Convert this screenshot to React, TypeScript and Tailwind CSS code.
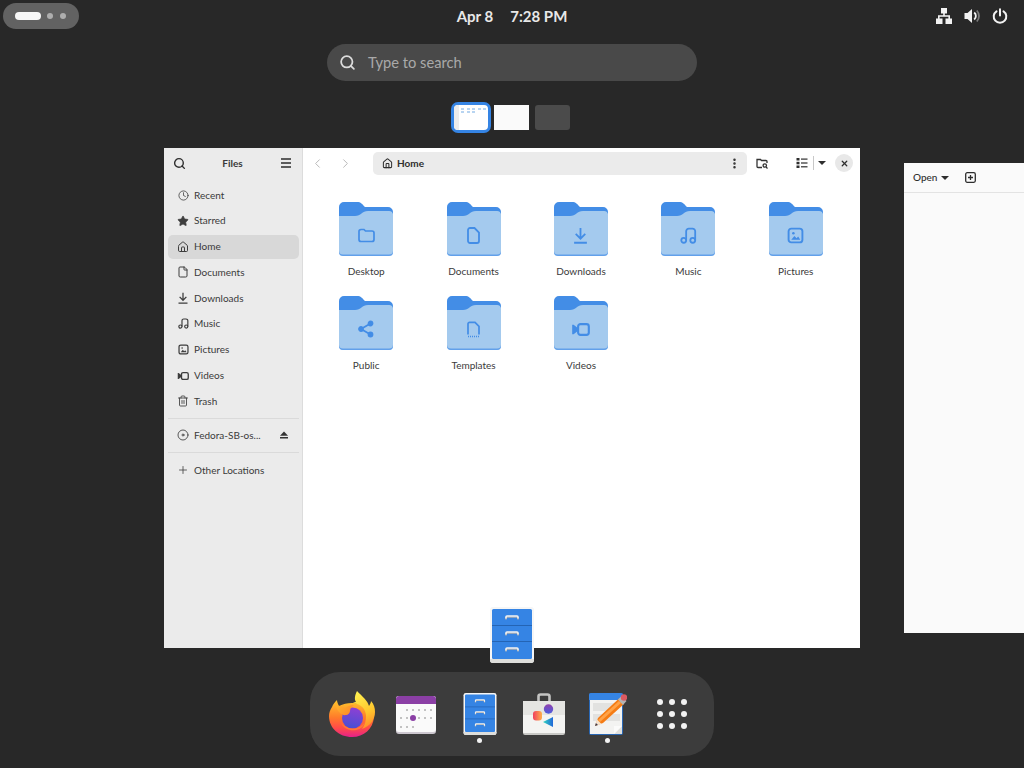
import {
  ChevronLeft,
  ChevronRight,
  Clock,
  Disc,
  EllipsisVertical,
  File,
  Home,
  Plus,
  Search,
  Star,
  Trash2,
  X,
} from "lucide-react";
import type { ReactNode } from "react";

type GlyphProps = { size?: number };

function VideoGlyph({ size = 12 }: GlyphProps) {
  return (
    <svg width={size} height={size} viewBox="0 0 16 16" fill="none">
      <rect x="6" y="3.500" width="9" height="9" rx="2" stroke="currentColor" strokeWidth="1.800" />
      <path d="M1 4v8h1.200L6 9V7L2.200 4z" fill="currentColor" />
    </svg>
  );
}

function DownloadGlyph({ size = 12 }: GlyphProps) {
  return (
    <svg width={size} height={size} viewBox="0 0 16 16" fill="none" stroke="currentColor" strokeWidth="1.700">
      <path d="M8 1v9.500M3.500 6.500 8 11l4.500-4.500M2 14.800h12" />
    </svg>
  );
}

function MusicGlyph({ size = 12 }: GlyphProps) {
  return (
    <svg width={size} height={size} viewBox="0 0 16 16" fill="none" stroke="currentColor" strokeWidth="1.700">
      <circle cx="3.500" cy="12.500" r="2.300" />
      <circle cx="12" cy="12.500" r="2.300" />
      <path d="M5.800 12.500V4a2.500 2.500 0 0 1 2.500-2.500h3.500A2.500 2.500 0 0 1 14.300 4v8.500" />
    </svg>
  );
}

function ImageGlyph({ size = 12 }: GlyphProps) {
  return (
    <svg width={size} height={size} viewBox="0 0 16 16" fill="none">
      <rect x="1.500" y="1.500" width="13" height="13" rx="2.500" stroke="currentColor" strokeWidth="1.800" />
      <path d="M4 12 7 8.500l2 2 1.500-1.500L12.500 12z" fill="currentColor" />
      <circle cx="6" cy="5.800" r="1.200" fill="currentColor" />
    </svg>
  );
}

function EjectGlyph() {
  return (
    <svg width="10" height="10" viewBox="0 0 10 10" fill="#333">
      <path d="M5 1.500 9 5.800H1z" />
      <rect x="1" y="7" width="8" height="1.500" />
    </svg>
  );
}

function Folder({ glyph }: { glyph: ReactNode }) {
  return (
    <div className="relative w-[54px] h-[56px]">
      <svg width="54" height="56" viewBox="0 0 54 56">
        <path
          d="M5 1h13c4 0 5 2 8 5h23a5 5 0 0 1 5 5v38a5 5 0 0 1-5 5H5a5 5 0 0 1-5-5V6a5 5 0 0 1 5-5z"
          fill="#438de6"
        />
        <path
          d="M0 15h16c6 0 7-5 13-5h21a4 4 0 0 1 4 3v38a4 4 0 0 1-4 4H4a4 4 0 0 1-4-4z"
          fill="#a4caee"
        />
        <path d="M0 50a4 4 0 0 0 4 3.500h46a4 4 0 0 0 4-3.500v1a4 4 0 0 1-4 4H4a4 4 0 0 1-4-4z" fill="#62a0ea" />
      </svg>
      <div className="absolute left-0 top-[13px] w-[54px] h-[42px] flex items-center justify-center text-[#438de6]">
        {glyph}
      </div>
    </div>
  );
}

const folders: { name: string; glyph: ReactNode }[] = [
  {
    name: "Desktop",
    glyph: (
      <svg width="17" height="17" viewBox="0 0 17 17" fill="none" stroke="currentColor" strokeWidth="1.700">
        <path d="M1 4.500a2 2 0 0 1 2-2h3l1.500 1.500H14a2 2 0 0 1 2 2v6.500a2 2 0 0 1-2 2H3a2 2 0 0 1-2-2z" />
      </svg>
    ),
  },
  {
    name: "Documents",
    glyph: (
      <svg width="17" height="17" viewBox="0 0 17 17" fill="none" stroke="currentColor" strokeWidth="1.800">
        <path d="M3 3a2 2 0 0 1 2-2h4.500L14 5.500V14a2 2 0 0 1-2 2H5a2 2 0 0 1-2-2z" />
      </svg>
    ),
  },
  { name: "Downloads", glyph: <DownloadGlyph size={17} /> },
  { name: "Music", glyph: <MusicGlyph size={17} /> },
  { name: "Pictures", glyph: <ImageGlyph size={17} /> },
  {
    name: "Public",
    glyph: (
      <svg width="18" height="18" viewBox="0 0 18 18" fill="currentColor" stroke="currentColor" strokeWidth="1.800">
        <circle cx="13.500" cy="3.500" r="2" />
        <circle cx="4" cy="9" r="2" />
        <circle cx="13.500" cy="14.500" r="2" />
        <path d="M13.500 3.500 4 9l9.500 5.500" fill="none" />
      </svg>
    ),
  },
  {
    name: "Templates",
    glyph: (
      <svg width="17" height="17" viewBox="0 0 17 17" fill="none" stroke="currentColor" strokeWidth="1.700">
        <path d="M3 13.500V2.800a1.500 1.500 0 0 1 1.500-1.500H10l4 4v8.200" />
        <path d="M3 15.500h11" strokeDasharray="1 1" />
      </svg>
    ),
  },
  { name: "Videos", glyph: <VideoGlyph size={19} /> },
];

function SideRow({ icon, label, active }: { icon: ReactNode; label: string; active?: boolean }) {
  return (
    <div
      className={`h-[24px] mb-[1.800px] ml-[4px] mr-[3px] pl-[9px] rounded-[5px] flex items-center gap-[5px] text-[10px] text-[#3a3a3a] ${
        active ? "bg-[#d8d8d8]" : ""
      }`}
    >
      <span className="w-[12px] h-[12px] flex items-center justify-center text-[#3d3d3d]">{icon}</span>
      <span>{label}</span>
    </div>
  );
}

function FilesIcon({ width, height }: { width: number; height: number }) {
  return (
    <svg width={width} height={height} viewBox="0 0 44 56">
      <rect x="0" y="0" width="44" height="56" rx="3" fill="#f6f6f6" />
      <path d="M0 53a3 3 0 0 0 3 3h38a3 3 0 0 0 3-3v-1H0z" fill="#dededb" />
      <rect x="2" y="2" width="40" height="50" rx="1.500" fill="#3584e4" />
      <path d="M2 18.500h40M2 34.500h40" stroke="#2464b4" strokeWidth="1" />
      {[10, 26, 42].map((y) => (
        <g key={y} fill="none" strokeWidth="1.600">
          <path d={`M16 ${y + 2.500}v-1.500a1 1 0 0 1 1-1h10a1 1 0 0 1 1 1v1.500`} stroke="#b0b0b0" />
          <path d={`M16 ${y + 1.500}v-1.500a1 1 0 0 1 1-1h10a1 1 0 0 1 1 1v1.500`} stroke="#f2f2f2" />
        </g>
      ))}
    </svg>
  );
}

function Firefox() {
  return (
    <svg width="46" height="46" viewBox="0 0 46 46">
      <defs>
        <linearGradient id="ffBody" x1="0.500" y1="0.050" x2="0.500" y2="1">
          <stop offset="0" stopColor="#ffc02c" />
          <stop offset="0.450" stopColor="#ff7a2a" />
          <stop offset="0.750" stopColor="#ff4a4a" />
          <stop offset="1" stopColor="#e6208a" />
        </linearGradient>
        <linearGradient id="ffFlame" x1="0.350" y1="0" x2="0.650" y2="1">
          <stop offset="0" stopColor="#fff04f" />
          <stop offset="0.600" stopColor="#ffc52c" />
          <stop offset="1" stopColor="#ff8a2a" />
        </linearGradient>
        <linearGradient id="ffGlobe" x1="0.600" y1="0" x2="0.400" y2="1">
          <stop offset="0" stopColor="#8f3fd4" />
          <stop offset="1" stopColor="#4750d2" />
        </linearGradient>
        <linearGradient id="ffFox" x1="0" y1="0" x2="1" y2="0.600">
          <stop offset="0" stopColor="#ffb52c" />
          <stop offset="1" stopColor="#ff8a2a" />
        </linearGradient>
      </defs>
      <path
        d="M8 9c0 2 1 4 2 6 4-2 8-3 13-3 10 0 21 3 22 14 -1 12-10 20-22 20C10 46 0 37 0 25c0-3 1-6 3-9 1-3 3-5 5-7z"
        fill="url(#ffBody)"
      />
      <path
        d="M28 0c-2 4-3 8-1 11 -1 0-2 0-3 1 8 1 13 6 13 13 0 5-1 9-4 13 8-3 13-9 13-17 0-4-1-8-4-11 0 2-1 3-2 5C39 10 33 5 28 0z"
        fill="url(#ffFlame)"
      />
      <circle cx="23.500" cy="27" r="10.500" fill="url(#ffGlobe)" />
      <path
        d="M7 15c4-1 7 1 9 2 2-2 6-3 9-3 -3 2-4 4-4 6 0 2-2 4-4 4C13 25 8 20 7 15z"
        fill="url(#ffFox)"
      />
      <path d="M12 32c3 6 9 8 15 7 5-1 8-4 9-8 -3 4-7 6.500-12 6.500 -5 0-9-2-12-5.500z" fill="#ff7a35" />
    </svg>
  );
}

function CalendarIcon() {
  const dots: [number, number][] = [
    [11, 15], [17, 15], [23, 15], [29, 15], [35, 15],
    [5, 23], [11, 23], [23, 23], [29, 23], [35, 23],
    [5, 32], [11, 32], [17, 32],
  ];
  return (
    <svg width="40" height="39" viewBox="0 0 40 39">
      <rect x="0" y="1" width="40" height="38" rx="3" fill="#cdc8d0" />
      <rect x="0" y="1" width="40" height="36" rx="3" fill="#fafafa" />
      <path d="M0 4a3 3 0 0 1 3-3h34a3 3 0 0 1 3 3v5H0z" fill="#8b3fa5" />
      {dots.map(([x, y]) => (
        <rect key={`${x}-${y}`} x={x - 1} y={y - 1} width="2" height="2" fill="#c2c2c2" />
      ))}
      <circle cx="17" cy="23" r="3" fill="#8b3fa5" />
    </svg>
  );
}

function SoftwareIcon() {
  return (
    <svg width="42" height="42" viewBox="0 0 42 42">
      <defs>
        <linearGradient id="swRed" x1="1" y1="0" x2="0" y2="0">
          <stop offset="0" stopColor="#ffb04a" />
          <stop offset="1" stopColor="#f03f5f" />
        </linearGradient>
        <linearGradient id="swBlue" x1="1" y1="0" x2="0" y2="0">
          <stop offset="0" stopColor="#2166d8" />
          <stop offset="1" stopColor="#2fd9bf" />
        </linearGradient>
        <linearGradient id="swPurple" x1="0.500" y1="0" x2="0.500" y2="1">
          <stop offset="0" stopColor="#9141ac" />
          <stop offset="1" stopColor="#4a5ee0" />
        </linearGradient>
      </defs>
      <path d="M15.500 8V3.500a2 2 0 0 1 2-2h7a2 2 0 0 1 2 2V8" fill="none" stroke="#c4c4c2" strokeWidth="2.600" />
      <rect x="0" y="8" width="42" height="34" rx="2" fill="#c9c9c6" />
      <rect x="0" y="8" width="42" height="32" rx="1" fill="#f4f4f2" />
      <rect x="0" y="8" width="42" height="14" fill="#e5e5e2" />
      <rect x="10" y="18" width="9" height="9.500" rx="3" fill="url(#swRed)" />
      <circle cx="25.500" cy="16" r="4.700" fill="url(#swPurple)" />
      <path d="M30 24v10l-10-5z" fill="url(#swBlue)" />
    </svg>
  );
}

function EditorIcon() {
  return (
    <svg width="38" height="43" viewBox="0 0 38 43">
      <rect x="0" y="0" width="34" height="42" rx="2" fill="#2a68b5" />
      <rect x="1" y="7" width="32" height="34" fill="#f3f3f1" />
      <path d="M0 2a2 2 0 0 1 2-2h30a2 2 0 0 1 2 2v5H0z" fill="#3584e4" />
      <rect x="4" y="10" width="24" height="8" fill="#e2e2e0" />
      <rect x="4" y="21" width="27" height="7" fill="#e2e2e0" />
      <path d="M25 41l8-8v8z" fill="#e0e0dd" />
      <path d="M25 41l8-8h-8z" fill="#fbfbfa" />
      <path d="M6 33 9 25 30 5.500l5 5.500L14 30z" fill="#f57c14" />
      <path d="M9 27 30 8l2 2L11 29z" fill="#ffa348" />
      <path d="M6 33 8 26.500 12.500 31z" fill="#f4e3cf" />
      <path d="M6 33 6.900 30 9 32z" fill="#3d3846" />
      <path d="M29 6.500 32.500 3l5 5-3.500 4z" fill="#b4b4b4" />
      <circle cx="35" cy="4.500" r="3.200" fill="#dc5a62" />
    </svg>
  );
}

function DockItem({ children, running }: { children: ReactNode; running?: boolean }) {
  return (
    <div className="relative w-[64px] h-[84px] flex items-center justify-center">
      {children}
      {running && <span className="absolute left-[29px] top-[66px] w-[5px] h-[5px] rounded-full bg-[#f2f2f2]" />}
    </div>
  );
}

export default function App() {
  return (
    <div className="w-[1024px] h-[768px] bg-[#282828] flex flex-col overflow-hidden font-['Lato','Noto_Sans',sans-serif]">
      <header className="h-[32px] px-[3px] pt-[3px] grid grid-cols-[1fr_auto_1fr] items-start">
        <div className="w-[76px] h-[26px] rounded-full bg-[#626262] flex items-center pl-[12px] gap-[6px]">
          <span className="w-[26px] h-[8px] rounded-full bg-[#f7f7f7]" />
          <span className="w-[6px] h-[6px] rounded-full bg-[#aeaeae]" />
          <span className="w-[6px] h-[6px] ml-[1px] rounded-full bg-[#aeaeae]" />
        </div>
        <div className="h-[26px] flex items-center gap-[17px] text-[15px] font-bold text-[#e8e8e8]">
          <span>Apr 8</span>
          <span>7:28 PM</span>
        </div>
        <div className="h-[26px] pr-[13px] flex items-center justify-end gap-[12px] text-[#f2f2f2]">
          <svg width="16" height="16" viewBox="0 0 16 16" fill="currentColor">
            <rect x="5" y="0" width="6" height="5.500" />
            <rect x="0" y="10.500" width="6.500" height="5.500" />
            <rect x="9.500" y="10.500" width="6.500" height="5.500" />
            <path d="M7.200 5h1.600v2.200H14V11h-1.600V8.800H3.600V11H2V7.200h5.200z" />
          </svg>
          <svg width="16" height="16" viewBox="0 0 16 16" fill="none">
            <path d="M0.500 5h3L8 1v14l-4.500-4h-3z" fill="currentColor" />
            <path d="M10.200 4.500a4.500 4.500 0 0 1 0 7" stroke="currentColor" strokeWidth="1.800" />
            <path d="M12.800 2.500a8 8 0 0 1 0 11" stroke="#7a7a7a" strokeWidth="1.800" />
          </svg>
          <svg width="16" height="16" viewBox="0 0 16 16" fill="none" stroke="currentColor" strokeWidth="2" strokeLinecap="round">
            <path d="M8 1.200v6.300" />
            <path d="M4.500 3.300a6.300 6.300 0 1 0 7 0" />
          </svg>
        </div>
      </header>

      <div className="mt-[12px] h-[37px] w-[370px] ml-[327px] rounded-full bg-[#494949] flex items-center pl-[12px] gap-[12px] text-[14.700px] text-[#a9a9a9] shrink-0">
        <Search size={17} strokeWidth={2.500} className="text-[#dcdcdc]" />
        <span>Type to search</span>
      </div>

      <div className="mt-[21px] h-[31px] ml-[451px] flex items-center shrink-0">
        <div className="w-[40px] h-[31px] border-[3px] border-[#3584e4] rounded-[7px] bg-white flex overflow-hidden">
          <div className="w-[5px] bg-[#ececec]" />
          <div className="flex-1 grid grid-cols-[repeat(5,3px)] gap-x-[2.500px] gap-y-[1px] pl-[2px] pt-[3px] content-start">
            {[0, 1, 2, 3, 4, 5, 6, 7].map((i) => (
              <span key={i} className="w-[3px] h-[2px] bg-[#b7d4f1]" />
            ))}
          </div>
        </div>
        <div className="ml-[3px] w-[35px] h-[25px] bg-[#fafafa]" />
        <div className="ml-[6px] w-[35px] h-[25px] rounded-[3px] bg-[#4b4b4b]" />
      </div>

      <main className="relative flex-1">
        <div className="absolute left-[164px] top-[15px] w-[696px] h-[500px] bg-white flex overflow-hidden">
          <aside className="w-[139px] shrink-0 bg-[#ebebeb] border-r border-[#dcdcdc]">
            <div className="h-[30px] pl-[9px] pr-[9px] flex items-center justify-between text-[#2e2e2e]">
              <Search size={13} strokeWidth={2.600} />
              <span className="pt-[1px] text-[10px] font-bold text-[#3a3a3a]">Files</span>
              <svg width="14" height="14" viewBox="0 0 14 14" stroke="currentColor" strokeWidth="1.500">
                <path d="M2 3h10M2 7h10M2 11h10" />
              </svg>
            </div>
            <div className="pt-[5px]">
              <SideRow icon={<Clock size={11} strokeWidth={1.700} />} label="Recent" />
              <SideRow icon={<Star size={12} fill="currentColor" strokeWidth={1.500} />} label="Starred" />
              <SideRow icon={<Home size={12} strokeWidth={2} />} label="Home" active />
              <SideRow icon={<File size={12} strokeWidth={2} />} label="Documents" />
              <SideRow icon={<DownloadGlyph size={12} />} label="Downloads" />
              <SideRow icon={<MusicGlyph size={11} />} label="Music" />
              <SideRow icon={<ImageGlyph size={11} />} label="Pictures" />
              <SideRow icon={<VideoGlyph size={12} />} label="Videos" />
              <SideRow icon={<Trash2 size={12} strokeWidth={1.700} />} label="Trash" />
            </div>
            <div className="ml-[4px] mr-[3px] mt-[5px] border-t border-[#dadada]" />
            <div className="mt-[3px] h-[26px] mx-[4px] pl-[9px] pr-[9px] flex items-center gap-[5px] text-[10px] text-[#3a3a3a]">
              <Disc size={12} strokeWidth={1.700} className="text-[#3d3d3d]" />
              <span className="flex-1">Fedora-SB-os...</span>
              <EjectGlyph />
            </div>
            <div className="ml-[4px] mr-[3px] mt-[4px] border-t border-[#dadada]" />
            <div className="mt-[5px]">
              <SideRow icon={<Plus size={14} strokeWidth={1.600} />} label="Other Locations" />
            </div>
          </aside>

          <section className="flex-1 min-w-0">
            <div className="h-[30px] flex items-center pl-[7px] text-[#2e2e2e]">
              <ChevronLeft size={15} strokeWidth={1.500} className="text-[#b4b4b4]" />
              <ChevronRight size={15} strokeWidth={1.500} className="ml-[13px] text-[#b4b4b4]" />
              <div className="ml-[20px] w-[374px] h-[23px] rounded-[5px] bg-[#ebebeb] flex items-center pl-[9px] pr-[6px]">
                <Home size={11} strokeWidth={2.200} />
                <span className="ml-[4px] pt-[1px] text-[10px] font-bold flex-1">Home</span>
                <EllipsisVertical size={13} strokeWidth={2.600} />
              </div>
              <svg className="ml-[9px] shrink-0" width="13" height="13" viewBox="0 0 13 13" fill="none" stroke="#333" strokeWidth="1.300">
                <path d="M6 10.500H2a1 1 0 0 1-1-1v-7h3.500l1 1H10a1 1 0 0 1 1 1v1.500" />
                <circle cx="8.800" cy="8.500" r="1.700" />
                <path d="m10 10 1.500 1.500" />
              </svg>
              <svg className="ml-[27px] shrink-0" width="12" height="12" viewBox="0 0 12 12" fill="currentColor">
                <rect x="0.500" y="1" width="3" height="2.500" />
                <rect x="0.500" y="4.800" width="3" height="2.500" />
                <rect x="0.500" y="8.500" width="3" height="2.500" />
                <rect x="5" y="1.500" width="6.500" height="1.200" />
                <rect x="5" y="5.400" width="6.500" height="1.200" />
                <rect x="5" y="9.200" width="6.500" height="1.200" />
              </svg>
              <span className="ml-[5px] h-[14px] border-l border-[#c8c8c8]" />
              <span className="ml-[4px] w-0 h-0 border-l-[4.500px] border-r-[4.500px] border-t-[4.500px] border-l-transparent border-r-transparent border-t-[#2e2e2e]" />
              <span className="ml-[9px] w-[18px] h-[18px] rounded-full bg-[#e8e8e8] flex items-center justify-center">
                <X size={9} strokeWidth={3.400} />
              </span>
            </div>
            <div className="pl-[9.500px] pt-[23px] grid grid-cols-[repeat(5,107.400px)] auto-rows-[94px]">
              {folders.map((f) => (
                <div key={f.name} className="flex flex-col items-center">
                  <Folder glyph={f.glyph} />
                  <span className="mt-[7px] text-[10px] leading-[14px] text-[#3a3a3a]">{f.name}</span>
                </div>
              ))}
            </div>
          </section>
        </div>

        <div className="absolute left-[904px] top-[30px] w-[120px] h-[470px] bg-[#fafafa]">
          <div className="h-[30px] border-b border-[#e3e3e3] pl-[9px] flex items-center text-[#2e2e2e]">
            <span className="text-[10px] font-medium">Open</span>
            <span className="ml-[4px] w-0 h-0 border-l-[4px] border-r-[4px] border-t-[4px] border-l-transparent border-r-transparent border-t-[#2e2e2e]" />
            <svg className="ml-[16px]" width="11" height="11" viewBox="0 0 11 11" fill="none" stroke="currentColor" strokeWidth="1.300">
              <rect x="0.700" y="0.700" width="9.600" height="9.600" rx="1.500" />
              <path d="M5.500 3v5M3 5.500h5" />
            </svg>
          </div>
        </div>

        <div className="absolute left-[490px] top-[474px]">
          <FilesIcon width={44} height={56} />
        </div>
      </main>

      <footer className="h-[84px] mb-[12px] shrink-0 ml-[310px] w-[404px] rounded-[30px] bg-[#3c3c3c] flex items-center pl-[10px]">
        <DockItem>
          <Firefox />
        </DockItem>
        <DockItem>
          <CalendarIcon />
        </DockItem>
        <DockItem running>
          <FilesIcon width={34} height={42} />
        </DockItem>
        <DockItem>
          <SoftwareIcon />
        </DockItem>
        <DockItem running>
          <EditorIcon />
        </DockItem>
        <DockItem>
          <div className="grid grid-cols-3 gap-[6px]">
            {[0, 1, 2, 3, 4, 5, 6, 7, 8].map((i) => (
              <span key={i} className="w-[6px] h-[6px] rounded-full bg-[#f2f2f2]" />
            ))}
          </div>
        </DockItem>
      </footer>
    </div>
  );
}
